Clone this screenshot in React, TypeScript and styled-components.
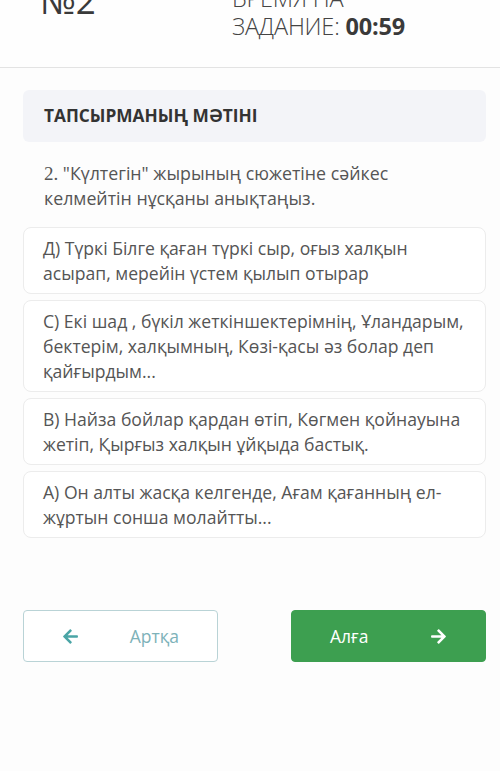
import React from "react";
import styled, { createGlobalStyle } from "styled-components";
import { FaArrowLeft, FaArrowRight } from "react-icons/fa";

const GlobalStyle = createGlobalStyle`
  html, body { margin: 0; padding: 0; background: #fdfdfd; }
  body { font-family: "Open Sans", "Noto Sans", sans-serif; -webkit-font-smoothing: antialiased; }
  * { box-sizing: border-box; }
`;

const Page = styled.div`
  width: 500px;
  height: 771px;
  overflow: hidden;
  background: #fdfdfd;
`;

const Header = styled.header`
  display: flex;
  height: 68px;
  overflow: hidden;
  border-bottom: 1px solid #e3e3e3;
  background: #fefefe;
  padding-left: 40px;
`;

const TaskNumber = styled.div`
  width: 192px;
  margin-top: -17px;
  font-size: 35px;
  line-height: 36px;
  color: #3a3a3a;
  font-weight: 400;
`;

const Timer = styled.div`
  margin-top: -16px;
  font-size: 23.5px;
  line-height: 28px;
  color: #444;
  font-weight: 300;
  letter-spacing: -0.2px;
`;

const TimerValue = styled.b`
  font-weight: 700;
  color: #3a3a3a;
`;

const Main = styled.main`
  padding: 22px 14px 0 23px;
  display: flex;
  flex-direction: column;
`;

const TitleCard = styled.div`
  background: #f3f4f8;
  border-radius: 6px;
  padding: 16px 21px;
  height: 52px;
  font-size: 17.3px;
  line-height: 20px;
  font-weight: 700;
  color: #333;
`;

const Question = styled.p`
  margin: 19px 0 16px;
  padding: 0 30px 0 21px;
  font-size: 17.8px;
  line-height: 25px;
  color: #555;
`;

const Num = styled.span`
  font-family: "Liberation Serif", serif;
  font-size: 19px;
`;

const Options = styled.div`
  display: flex;
  flex-direction: column;
  gap: 6px;
`;

const Option = styled.div`
  border: 1px solid #ececec;
  border-radius: 8px;
  background: #fff;
  padding: 8px 19px 7px;
  font-size: 17.6px;
  line-height: 25px;
  color: #555;
`;

const Buttons = styled.div`
  display: flex;
  justify-content: space-between;
  margin-top: 72px;
`;

const NavButton = styled.button<{ $primary?: boolean }>`
  width: 195px;
  height: 52px;
  display: flex;
  align-items: center;
  justify-content: space-between;
  padding: 0 38px;
  border-radius: 4px;
  font-family: "Open Sans", sans-serif;
  font-size: 17.5px;
  border: 1px solid ${(p) => (p.$primary ? "#3d9f50" : "#b9d3d6")};
  background: ${(p) => (p.$primary ? "#3d9f50" : "#fff")};
  color: ${(p) => (p.$primary ? "#fff" : "#7db2b9")};
  cursor: pointer;
  svg { color: ${(p) => (p.$primary ? "#fff" : "#4aa5a6")}; }
`;

export default function App() {
  const options = [
    "Д) Түркі Білге қаған түркі сыр, оғыз халқын асырап, мерейін үстем қылып отырар",
    "С) Екі шад , бүкіл жеткіншектерімнің, Ұландарым, бектерім, халқымның, Көзі-қасы әз болар деп қайғырдым...",
    "В) Найза бойлар қардан өтіп, Көгмен қойнауына жетіп, Қырғыз халқын ұйқыда бастық.",
    "А) Он алты жасқа келгенде, Ағам қағанның ел-жұртын сонша молайтты...",
  ];
  return (
    <Page>
      <GlobalStyle />
      <Header>
        <TaskNumber>№2</TaskNumber>
        <Timer>
          ВРЕМЯ НА
          <br />
          ЗАДАНИЕ: <TimerValue>00:59</TimerValue>
        </Timer>
      </Header>
      <Main>
        <TitleCard>ТАПСЫРМАНЫҢ МӘТІНІ</TitleCard>
        <Question>
          <Num>2.</Num> "Күлтегін" жырының сюжетіне сәйкес келмейтін нұсқаны анықтаңыз.
        </Question>
        <Options>
          {options.map((o) => (
            <Option key={o}>{o}</Option>
          ))}
        </Options>
        <Buttons>
          <NavButton>
            <FaArrowLeft size={17} />
            <span>Артқа</span>
          </NavButton>
          <NavButton $primary>
            <span>Алға</span>
            <FaArrowRight size={17} />
          </NavButton>
        </Buttons>
      </Main>
    </Page>
  );
}
